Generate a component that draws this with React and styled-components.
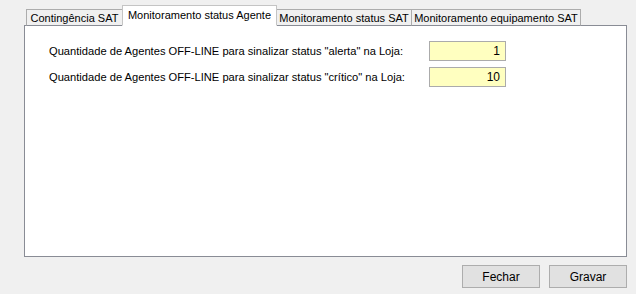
import React from 'react'
import styled, { createGlobalStyle } from 'styled-components'

const GlobalStyle = createGlobalStyle`
  html, body {
    margin: 0;
    background: #f0f0f0;
    font-family: "Liberation Sans", Arial, sans-serif;
    font-size: 11px;
    color: #000;
  }
`

const Window = styled.div`
  width: 636px;
  height: 294px;
  box-sizing: border-box;
  padding: 6px 9px 0 24px;
  display: flex;
  flex-direction: column;
`

const TabStrip = styled.div`
  display: flex;
  align-items: flex-end;
  height: 20px;
  padding-left: 2px;
  margin-bottom: -1px;
  position: relative;
  z-index: 1;
`

const Tab = styled.div`
  box-sizing: border-box;
  width: ${p => p.$w}px;
  height: ${p => (p.$active ? 21 : 17)}px;
  margin-left: ${p => (p.$first ? 0 : -1)}px;
  border: 1px solid ${p => (p.$active ? '#c4c4c4' : '#acacac')};
  border-bottom: ${p => (p.$active ? '1px solid #fff' : '1px solid #898c95')};
  background: ${p => (p.$active ? '#fff' : '#f0f0f0')};
  display: flex;
  align-items: center;
  justify-content: center;
  padding-bottom: ${p => (p.$active ? 1 : 0)}px;
  white-space: nowrap;
  position: relative;
  z-index: ${p => (p.$active ? 2 : 1)};
`

const Panel = styled.div`
  box-sizing: border-box;
  height: 232px;
  background: #fff;
  border: 1px solid #898c95;
  padding: 15px 0 0 24px;
  display: grid;
  grid-template-columns: 380px 77px;
  grid-auto-rows: 20px;
  row-gap: 6px;
  align-content: start;
`

const Label = styled.div`
  display: flex;
  align-items: center;
  white-space: nowrap;
  font-size: 11.15px;
`

const NumberBox = styled.div`
  box-sizing: border-box;
  border: 1px solid #ababab;
  background: #ffffc0;
  display: flex;
  align-items: center;
  justify-content: flex-end;
  padding-right: 5px;
  font-size: 12px;
`

const Footer = styled.div`
  display: flex;
  justify-content: flex-end;
  gap: 9px;
  margin-top: 8px;
`

const Button = styled.div`
  box-sizing: border-box;
  width: 78px;
  height: 23px;
  border: 1px solid #adadad;
  background: #e1e1e1;
  display: flex;
  align-items: center;
  justify-content: center;
  font-size: 12px;
`

const tabs = [
  { text: 'Contingência SAT', w: 97 },
  { text: 'Monitoramento status Agente', w: 155, active: true },
  { text: 'Monitoramento status SAT', w: 136 },
  { text: 'Monitoramento equipamento SAT', w: 170 },
]

const rows = [
  { label: 'Quantidade de Agentes OFF-LINE para sinalizar status "alerta" na Loja:', value: '1' },
  { label: 'Quantidade de Agentes OFF-LINE para sinalizar status "crítico" na Loja:', value: '10' },
]

export default function App() {
  return (
    <Window>
      <GlobalStyle />
      <TabStrip>
        {tabs.map((t, i) => (
          <Tab key={t.text} $w={t.w} $active={t.active} $first={i === 0}>
            {t.text}
          </Tab>
        ))}
      </TabStrip>
      <Panel>
        {rows.map(r => (
          <React.Fragment key={r.label}>
            <Label>{r.label}</Label>
            <NumberBox>{r.value}</NumberBox>
          </React.Fragment>
        ))}
      </Panel>
      <Footer>
        <Button>Fechar</Button>
        <Button>Gravar</Button>
      </Footer>
    </Window>
  )
}
